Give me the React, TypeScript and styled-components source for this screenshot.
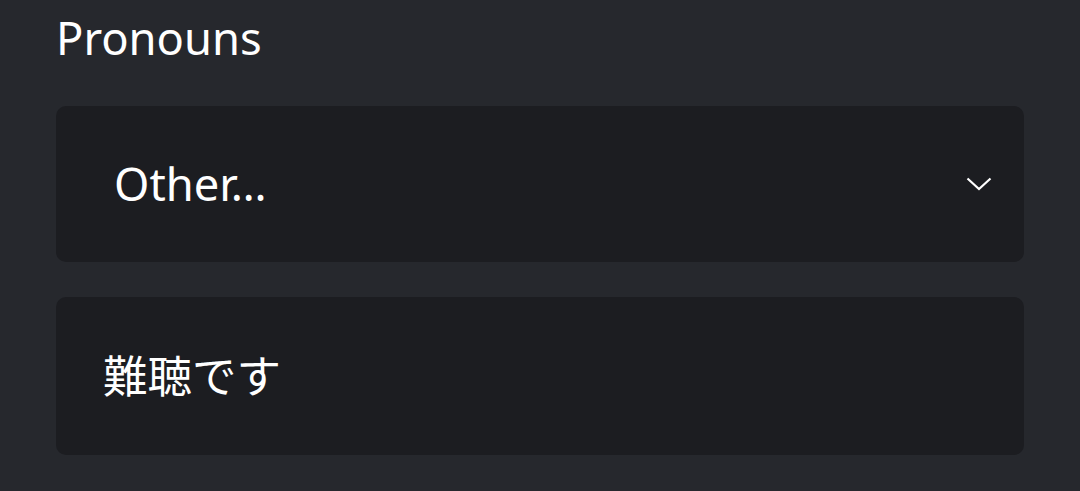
import React from "react";
import styled, { createGlobalStyle } from "styled-components";

const GlobalStyle = createGlobalStyle`
  html, body {
    margin: 0;
    padding: 0;
    background: #26282d;
  }
  body {
    font-family: "Noto Sans", "Noto Sans CJK JP", sans-serif;
    color: #ffffff;
  }
`;

const Page = styled.div`
  width: 1080px;
  height: 491px;
  box-sizing: border-box;
  padding: 10px 56px 0 56px;
  display: flex;
  flex-direction: column;
  background: #26282d;
  overflow: hidden;
`;

const Heading = styled.h2`
  margin: 0 0 41px;
  font-size: 45.3px;
  font-weight: 400;
  line-height: 55px;
  color: #ffffff;
`;

const Fields = styled.div`
  display: flex;
  flex-direction: column;
  gap: 35px;
`;

const Field = styled.div<{ $inset: number; $height: number }>`
  height: ${(p) => p.$height}px;
  box-sizing: border-box;
  padding: 0 32px 0 ${(p) => p.$inset}px;
  display: flex;
  align-items: center;
  justify-content: space-between;
  background: #1c1d21;
  border-radius: 10px;
`;

const Value = styled.span<{ $size?: number }>`
  font-size: ${(p) => p.$size ?? 45.3}px;
  line-height: 1;
  color: #ffffff;
`;

const Chevron = () => (
  <svg width="26" height="14" viewBox="0 0 26 14" fill="none">
    <path d="M1.5 1.5 L13 12 L24.5 1.5" stroke="#ffffff" strokeWidth="2.2" />
  </svg>
);

export default function App() {
  return (
    <>
      <GlobalStyle />
      <Page>
        <Heading>Pronouns</Heading>
        <Fields>
          <Field $inset={58} $height={156}>
            <Value>Other…</Value>
            <Chevron />
          </Field>
          <Field $inset={47} $height={158}>
            <Value $size={44.5}>難聴です</Value>
          </Field>
        </Fields>
      </Page>
    </>
  );
}
